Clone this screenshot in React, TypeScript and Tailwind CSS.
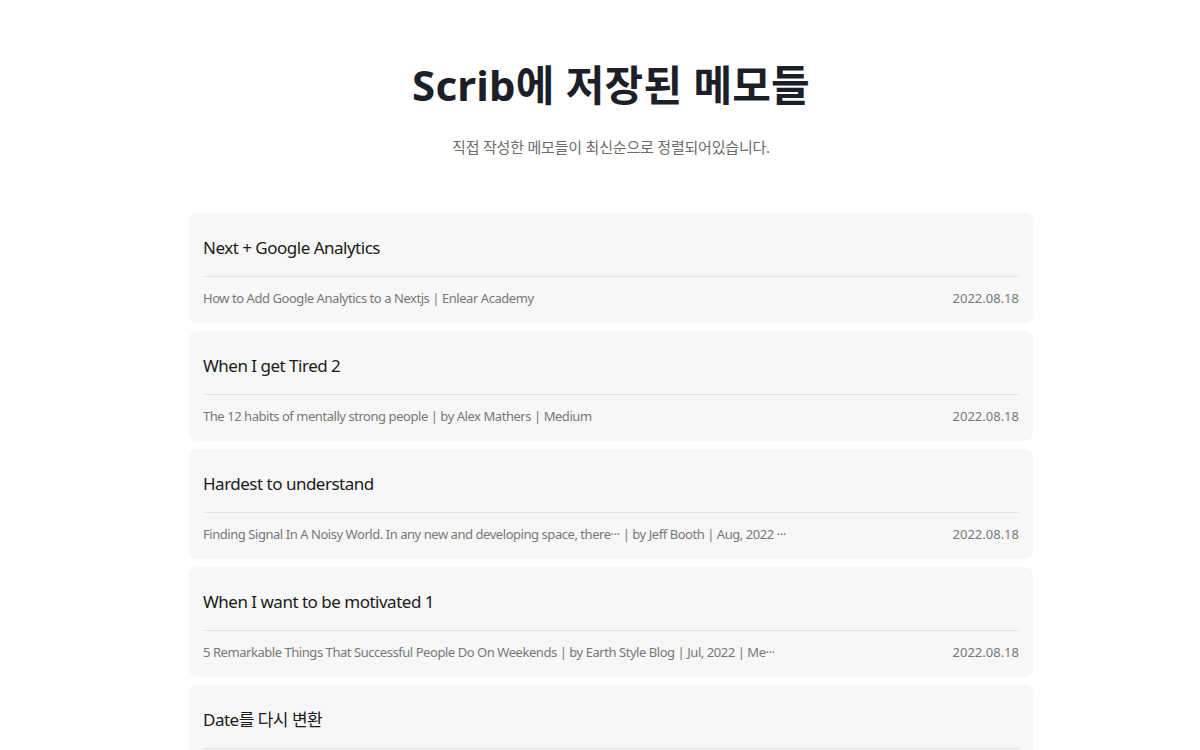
import React from "react";

type Memo = {
  id: number;
  title: string;
  summary: string;
  date: string;
};

const memos: Memo[] = [
  {
    id: 1,
    title: "Next + Google Analytics",
    summary: "How to Add Google Analytics to a Nextjs | Enlear Academy",
    date: "2022.08.18",
  },
  {
    id: 2,
    title: "When I get Tired 2",
    summary: "The 12 habits of mentally strong people | by Alex Mathers | Medium",
    date: "2022.08.18",
  },
  {
    id: 3,
    title: "Hardest to understand",
    summary:
      "Finding Signal In A Noisy World. In any new and developing space, there··· | by Jeff Booth | Aug, 2022 ···",
    date: "2022.08.18",
  },
  {
    id: 4,
    title: "When I want to be motivated 1",
    summary:
      "5 Remarkable Things That Successful People Do On Weekends | by Earth Style Blog | Jul, 2022 | Me···",
    date: "2022.08.18",
  },
  {
    id: 5,
    title: "Date를 다시 변환",
    summary: "Date 객체를 문자열로 바꾸는 방법 | 자바스크립트",
    date: "2022.08.18",
  },
];

export default function App() {
  return (
    <div
      className="min-h-screen bg-white pl-[22px]"
      style={{ fontFamily: '"Noto Sans", "Noto Sans CJK KR", sans-serif' }}
    >
      <header className="pt-[54px] text-center">
        <h1 className="text-[42px] font-bold leading-[62px] tracking-[0.2px] text-[#1c1f2a]">
          Scrib에 저장된 메모들
        </h1>
        <p className="mt-[19px] text-[15px] leading-[24px] tracking-[-0.2px] text-[#6b6b6b]">
          직접 작성한 메모들이 최신순으로 정렬되어있습니다.
        </p>
      </header>

      <main className="mx-auto mt-[54px] flex w-[844px] flex-col gap-[8px] pb-10">
        {memos.map((m) => (
          <MemoCard key={m.id} memo={m} />
        ))}
      </main>
    </div>
  );
}

function MemoCard({ memo }: { memo: Memo }) {
  return (
    <article className="rounded-[8px] bg-[#f7f7f7] px-[14px] pb-[15px] pt-[21px]">
      <h2 className="text-[17px] leading-[28px] tracking-[-0.5px] text-[#1a1a1a]">{memo.title}</h2>
      <div className="mt-[14px] h-px bg-[#e3e3e3]" />
      <div className="mt-[11px] flex items-center justify-between text-[13px] leading-[20px] text-[#777]">
        <span className="truncate pr-6 tracking-[-0.45px]">{memo.summary}</span>
        <span className="shrink-0">{memo.date}</span>
      </div>
    </article>
  );
}
